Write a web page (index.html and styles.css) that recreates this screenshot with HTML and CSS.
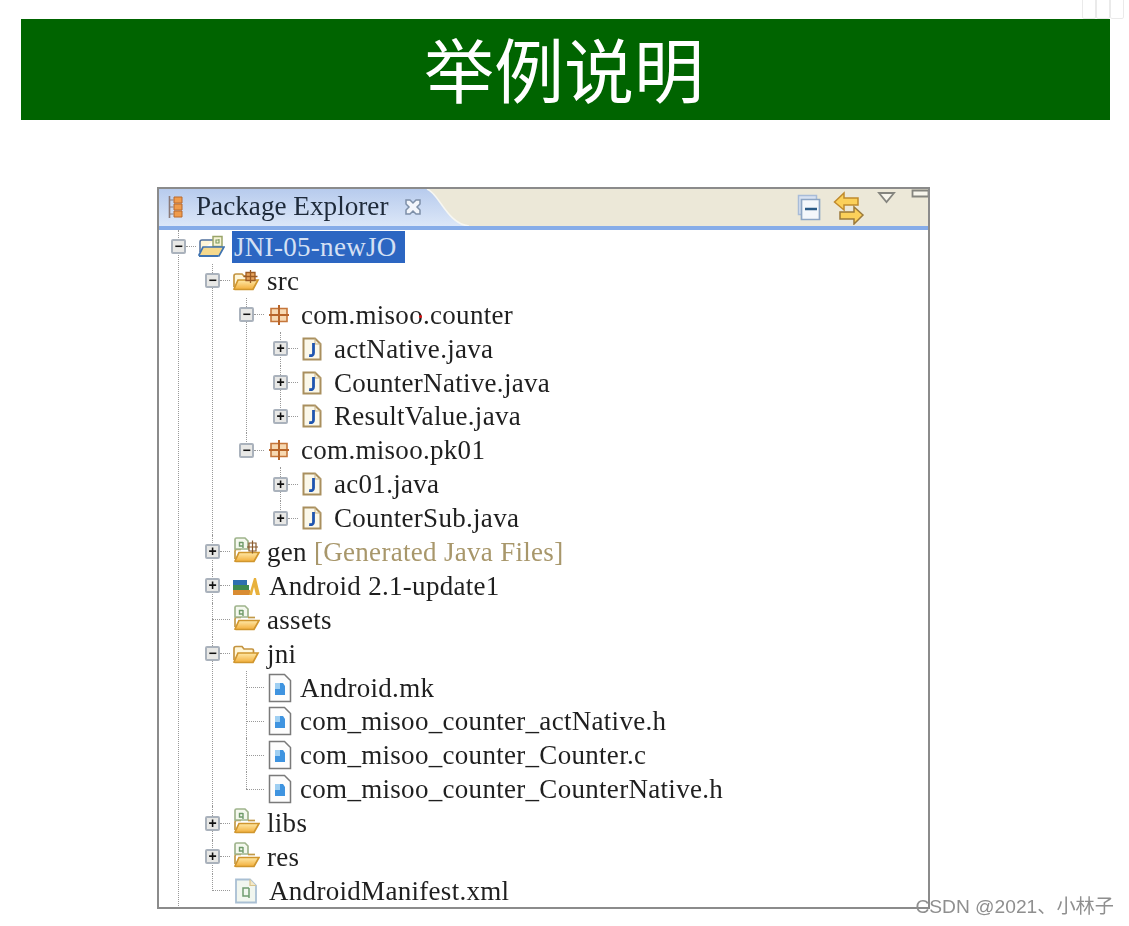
FILE: index.html
```html
<!DOCTYPE html>
<html lang="zh">
<head>
<meta charset="utf-8">
<title>举例说明</title>
<link rel="stylesheet" href="styles.css">
</head>
<body>
<svg class="defs" width="0" height="0" aria-hidden="true">
  <defs>
    <linearGradient id="folderFill" x1="0" y1="0" x2="0" y2="1">
      <stop offset="0" stop-color="#ffe9a8"/><stop offset="1" stop-color="#f2ae3a"/>
    </linearGradient>
    <linearGradient id="tabFill" x1="0" y1="0" x2="0" y2="1">
      <stop offset="0" stop-color="#b7cbed"/><stop offset="1" stop-color="#dce7f8"/>
    </linearGradient>
    <symbol id="i-folder" viewBox="0 0 28 24">
      <path d="M2 18V6.500C2 5 3 4.500 4 4.500h6l2 2.500h8c1 0 1.500.6 1.500 1.500V11" fill="#fff6d8" stroke="#c49440" stroke-width="1.700"/>
      <path d="M2 20l4-9h20l-5 9.500H3z" fill="url(#folderFill)" stroke="#d0962e" stroke-width="1.700"/>
    </symbol>
    <symbol id="i-srcfolder" viewBox="0 0 28 24">
      <path d="M2 18V7c0-1.500 1-2 2-2h6l2 2h8" fill="#fff6d8" stroke="#c49440" stroke-width="1.700"/>
      <path d="M2 20l4-9h20l-5 9.500H3z" fill="url(#folderFill)" stroke="#d0962e" stroke-width="1.700"/>
      <path d="M14 3.500h9v8h-9zM18.500 1v13M11.500 7.500h14" fill="#e8a45c" stroke="#9c5a22" stroke-width="1.300"/>
    </symbol>
    <symbol id="i-resfolder" viewBox="0 0 28 28">
      <path d="M3 23V15c0-1 .6-1.500 1.500-1.500H9" fill="none" stroke="#c29a48" stroke-width="1.700"/>
      <path d="M3 3.500c0-1 .8-1.500 1.500-1.500H13l3 3v8H3z" fill="#f4f8ee" stroke="#9fb48c" stroke-width="1.700"/>
      <path d="M11 6.500H7.500v3.500H11V6M11 10v2" fill="none" stroke="#6f9a6a" stroke-width="1.400"/>
      <path d="M16 13.500h7" stroke="#c29a48" stroke-width="1.700"/>
      <path d="M3 25l4-8.500h20l-5 9H4z" fill="url(#folderFill)" stroke="#d0962e" stroke-width="1.700"/>
    </symbol>
    <symbol id="i-genfolder" viewBox="0 0 28 28">
      <path d="M3 23V15c0-1 .6-1.500 1.500-1.500H9" fill="none" stroke="#c29a48" stroke-width="1.700"/>
      <path d="M3 3.500c0-1 .8-1.500 1.500-1.500H13l3 3v8H3z" fill="#f4f8ee" stroke="#9fb48c" stroke-width="1.700"/>
      <path d="M11 6.500H7.500v3.500H11V6M11 10v2" fill="none" stroke="#6f9a6a" stroke-width="1.400"/>
      <path d="M3 25l4-8.500h20l-5 9H4z" fill="url(#folderFill)" stroke="#d0962e" stroke-width="1.700"/>
      <path d="M17 7h7v8h-7zM20.500 4.500v13M15 11h11" fill="none" stroke="#8a5a2c" stroke-width="1.200"/>
    </symbol>
    <symbol id="i-project" viewBox="0 0 28 24">
      <path d="M3 17V7c0-1.500 1-2 2-2h12" fill="#fff6d8" stroke="#4f6f9c" stroke-width="1.500"/>
      <path d="M16 1.500h9v10h-9z" fill="#f6f4d6" stroke="#9aa56a" stroke-width="1.500"/>
      <path d="M22 5h-3v3h3V4" fill="none" stroke="#7c9a5e" stroke-width="1.100"/>
      <path d="M2 20l4-8h21l-5 9H3z" fill="#f5d98c" stroke="#3f73b0" stroke-width="1.700"/>
      <path d="M2 21h19" stroke="#3f73b0" stroke-width="2"/>
    </symbol>
    <symbol id="i-package" viewBox="0 0 22 22">
      <path d="M3 4.500h16v13H3z" fill="#f7d9b2" stroke="#c5763a" stroke-width="1.600"/>
      <path d="M11 1v20M1 11h20" stroke="#b8652a" stroke-width="2"/>
    </symbol>
    <symbol id="i-java" viewBox="0 0 20 24">
      <path d="M1.500 1.500h11.500l5.500 5.500v15.500h-17z" fill="#fbf8ea" stroke="#a98f5e" stroke-width="2"/>
      <path d="M13 1.500v5.500h5.500" fill="none" stroke="#c9b488" stroke-width="1"/>
      <path d="M11.500 6v10c0 2.300-1.500 3-4.300 2.500" fill="none" stroke="#1f55b0" stroke-width="2.800"/>
    </symbol>
    <symbol id="i-file" viewBox="0 0 26 30">
      <path d="M2.500 1.500h15l6 6v21h-21z" fill="#fdfdfd" stroke="#7a7a7a" stroke-width="1.500"/>
      <path d="M8 10h8l2 3v9H8z" fill="#3f94e0"/>
      <path d="M8 10h5v6H8z" fill="#9fcff2"/>
    </symbol>
    <symbol id="i-xml" viewBox="0 0 24 26">
      <path d="M2 1.500h14l6 6v17H2z" fill="#f1f6ef" stroke="#a9bfd3" stroke-width="1.800"/>
      <path d="M16 1.500v6h6" fill="#f4e9c8" stroke="#d8c48c" stroke-width="1.200"/>
      <path d="M15 10H9v8h6V10m0 8v2" fill="none" stroke="#6f9c70" stroke-width="1.500"/>
    </symbol>
    <symbol id="i-lib" viewBox="0 0 28 22">
      <path d="M1 5h14v5H1z" fill="#2d6fb0"/>
      <path d="M1 10h16v5H1z" fill="#3f8a4f"/>
      <path d="M1 15h17v5H1z" fill="#d98c32"/>
      <path d="M17 20l5-17h2l4 17h-4l-2-8-2 8z" fill="#e8b13c"/>
    </symbol>
  </defs>
</svg>

<div class="ghost" aria-hidden="true"><i></i><i></i><i></i></div>

<header class="banner"><h1>举例说明</h1></header>

<section class="view">
  <div class="view-head">
    <div class="tab">
      <svg class="tab-icon" width="18" height="24" viewBox="0 0 18 24"><path d="M2.500 1v22" stroke="#8a7a78" stroke-width="1.600"/><path d="M2.500 5h4M2.500 12h4M2.500 19h4" stroke="#8a7a78"/><path d="M7 2h8v6H7zM7 9h8v6H7zM7 16h8v6H7z" fill="#ef9b4c" stroke="#b8682c"/></svg>
      <span class="tab-title">Package Explorer</span>
      <svg class="tab-close" width="20" height="20" viewBox="0 0 20 20"><path d="M3 3h4l3 3 3-3h4v4l-3 3 3 3v4h-4l-3-3-3 3H3v-4l3-3-3-3z" fill="#f2f5fb" stroke="#7d8fa8" stroke-width="1.500"/></svg>
    </div>
    <svg class="tab-curve" width="44" height="37" viewBox="0 0 44 37" preserveAspectRatio="none"><path d="M0 0H2C14 4 22 35 44 37H0z" fill="url(#tabFill)"/><path d="M2 0C14 4 22 35 44 37" fill="none" stroke="#f7f7f2" stroke-width="1.500"/></svg>
    <div class="toolbar">
      <svg width="26" height="28" viewBox="0 0 26 28"><path d="M1.500 2.500h18v19h-18z" fill="#d8e2f2" stroke="#a8bcd8" stroke-width="1.500"/><path d="M4.500 6.500h18v20h-18z" fill="#f4f7fb" stroke="#8ea6c4" stroke-width="1.700"/><path d="M8 16h12" stroke="#2b5a86" stroke-width="2.500"/></svg>
      <svg class="sync" width="32" height="34" viewBox="0 0 32 34"><path d="M1.500 11L11 2v5h14v7H11v5z" fill="#fbd05a" stroke="#c08a2c" stroke-width="1.500"/><path d="M30 24l-9-8v5H7v7h14v5z" fill="#fbd05a" stroke="#9c7a3a" stroke-width="1.500"/></svg>
      <svg class="menu" width="20" height="14" viewBox="0 0 20 14"><path d="M2 2h15l-7.500 9z" fill="#f7f5ec" stroke="#85857f" stroke-width="1.800"/></svg>
      <svg class="min" width="18" height="10" viewBox="0 0 18 10"><path d="M1.500 1.500h16v6h-16z" fill="#f7f5ec" stroke="#85857f" stroke-width="1.800"/></svg>
    </div>
  </div>

  <ul class="tree">
    <li>
      <div class="row"><span class="tog">−</span><span class="dash"></span><svg class="ic ic-project"><use href="#i-project"/></svg><span class="label selected">JNI-05-newJO</span></div>
      <ul>
        <li>
          <div class="row"><span class="tog">−</span><span class="dash"></span><svg class="ic ic-folder"><use href="#i-srcfolder"/></svg><span class="label">src</span></div>
          <ul>
            <li>
              <div class="row"><span class="tog">−</span><span class="dash"></span><svg class="ic ic-pkg"><use href="#i-package"/></svg><span class="label">com.misoo.counter<i class="dot"></i></span></div>
              <ul>
                <li><div class="row"><span class="tog plus">+</span><span class="dash"></span><svg class="ic ic-java"><use href="#i-java"/></svg><span class="label">actNative.java</span></div></li>
                <li><div class="row"><span class="tog plus">+</span><span class="dash"></span><svg class="ic ic-java"><use href="#i-java"/></svg><span class="label">CounterNative.java</span></div></li>
                <li><div class="row"><span class="tog plus">+</span><span class="dash"></span><svg class="ic ic-java"><use href="#i-java"/></svg><span class="label">ResultValue.java</span></div></li>
              </ul>
            </li>
            <li>
              <div class="row"><span class="tog">−</span><span class="dash"></span><svg class="ic ic-pkg"><use href="#i-package"/></svg><span class="label">com.misoo.pk01</span></div>
              <ul>
                <li><div class="row"><span class="tog plus">+</span><span class="dash"></span><svg class="ic ic-java"><use href="#i-java"/></svg><span class="label">ac01.java</span></div></li>
                <li><div class="row"><span class="tog plus">+</span><span class="dash"></span><svg class="ic ic-java"><use href="#i-java"/></svg><span class="label">CounterSub.java</span></div></li>
              </ul>
            </li>
          </ul>
        </li>
        <li><div class="row"><span class="tog plus">+</span><span class="dash"></span><svg class="ic ic-res"><use href="#i-genfolder"/></svg><span class="label">gen <span class="deco">[Generated Java Files]</span></span></div></li>
        <li><div class="row"><span class="tog plus">+</span><span class="dash"></span><svg class="ic ic-lib"><use href="#i-lib"/></svg><span class="label">Android 2.1-update1</span></div></li>
        <li><div class="row"><span class="leaf"></span><svg class="ic ic-res"><use href="#i-resfolder"/></svg><span class="label">assets</span></div></li>
        <li>
          <div class="row"><span class="tog">−</span><span class="dash"></span><svg class="ic ic-folder"><use href="#i-folder"/></svg><span class="label">jni</span></div>
          <ul>
            <li><div class="row"><span class="leaf"></span><svg class="ic ic-file"><use href="#i-file"/></svg><span class="label">Android.mk</span></div></li>
            <li><div class="row"><span class="leaf"></span><svg class="ic ic-file"><use href="#i-file"/></svg><span class="label">com_misoo_counter_actNative.h</span></div></li>
            <li><div class="row"><span class="leaf"></span><svg class="ic ic-file"><use href="#i-file"/></svg><span class="label">com_misoo_counter_Counter.c</span></div></li>
            <li><div class="row"><span class="leaf"></span><svg class="ic ic-file"><use href="#i-file"/></svg><span class="label">com_misoo_counter_CounterNative.h</span></div></li>
          </ul>
        </li>
        <li><div class="row"><span class="tog plus">+</span><span class="dash"></span><svg class="ic ic-res"><use href="#i-resfolder"/></svg><span class="label">libs</span></div></li>
        <li><div class="row"><span class="tog plus">+</span><span class="dash"></span><svg class="ic ic-res"><use href="#i-resfolder"/></svg><span class="label">res</span></div></li>
        <li><div class="row"><span class="leaf"></span><svg class="ic ic-xml"><use href="#i-xml"/></svg><span class="label">AndroidManifest.xml</span></div></li>
      </ul>
    </li>
  </ul>
</section>

<div class="watermark">CSDN @2021、小林子</div>
</body>
</html>
```
FILE: styles.css
```css
* { box-sizing: border-box; }
html, body { margin: 0; padding: 0; height: 926px; overflow: hidden; background: #fff; }
body { position: relative; padding-top: 19px; font-family: "Liberation Serif", "Noto Sans CJK TC", serif; }
.defs { position: absolute; }

.banner {
  margin-left: 21px;
  width: 1089px;
  height: 101px;
  background: #006400;
  display: flex;
  align-items: center;
  justify-content: center;
}
.banner h1 {
  margin: 0 0 4px -3px;
  font-family: "Noto Sans CJK SC", "Noto Sans CJK TC", sans-serif;
  font-weight: 400;
  font-size: 70px;
  line-height: 1;
  color: #fff;
  filter: blur(.5px);
}

.ghost { position: absolute; top: -6px; left: 1082px; display: flex; opacity: .55; }
.ghost i { width: 14px; height: 25px; border: 1px solid #d9d9d9; border-radius: 2px; }

.view {
  margin: 67px 0 0 157px;
  width: 773px;
  height: 722px;
  border: 2px solid #8b8b8b;
  overflow: hidden;
  background: #fff;
}
.view-head {
  display: flex;
  height: 41px;
  border-bottom: 4px solid #86ace8;
  background: #ece8d8;
}
.tab {
  width: 266px;
  display: flex;
  align-items: center;
  padding: 0 0 2px 8px;
  background: linear-gradient(#b7cbed, #dce7f8);
}
.tab-icon { flex: none; }
.tab-title { margin-left: 11px; font-size: 27.2px; color: #1e2a3a; white-space: nowrap; filter: blur(.4px); }
.tab-close { margin-left: 14px; flex: none; }
.tab-curve { flex: none; }
.toolbar { flex: 1; display: flex; align-items: flex-start; justify-content: flex-end; }
.toolbar svg { flex: none; margin-top: 4px; filter: blur(.4px); }
.toolbar .sync { margin: 2px 0 0 10px; }
.toolbar .menu { margin: 2px 0 0 12px; }
.toolbar .min { margin: 0 -1px 0 14px; }

.tree, .tree ul { list-style: none; margin: 0; padding: 0; }
.tree { padding: 0 0 0 12px; filter: blur(.45px); }
.tree ul { margin-left: 34px; }
.tree li { position: relative; }
.tree li::before {
  content: "";
  position: absolute;
  left: 7px;
  top: 0;
  bottom: 0;
  border-left: 1px dotted #999;
}
.tree li:last-child::before { bottom: auto; height: 17px; }
.tree > li:last-child::before { height: auto; bottom: -40px; }
.row { display: flex; align-items: center; height: 33.9px; white-space: nowrap; position: relative; }
.tog {
  flex: none;
  position: relative;
  width: 15px;
  height: 15px;
  border: 2px solid #aab2bc;
  border-radius: 2px;
  background: #e8e8e6;
  color: #111;
  font: bold 14px/10px "Liberation Sans", sans-serif;
  text-align: center;
}
.dash, .leaf { flex: none; height: 0; border-top: 1px dotted #999; }
.dash { width: 10px; }
.leaf { width: 18px; margin-left: 7px; }
.ic { flex: none; }
.ic-project { width: 28px; height: 24px; margin: 0 7px 0 1px; }
.ic-folder { width: 28px; height: 24px; margin: 0 7px 0 2px; }
.ic-pkg { width: 22px; height: 22px; margin: 0 11px 0 4px; }
.ic-java { width: 20px; height: 24px; margin: 0 12px 0 4px; }
.ic-res { width: 28px; height: 28px; margin: -4px 7px 0 2px; }
.ic-lib { width: 28px; height: 22px; margin: 0 9px 0 2px; }
.ic-file { width: 26px; height: 30px; margin: 0 7px 0 3px; }
.ic-xml { width: 24px; height: 26px; margin: 0 11px 0 4px; }
.label { position: relative; font-size: 27px; letter-spacing: .3px; line-height: 32px; color: #1f1f1f; }
.label.selected { background: #2c66c2; color: #d4e0f4; padding: 0 8px 0 2px; }
.deco { color: #a8976b; }
.dot { position: absolute; left: 118px; top: 16px; width: 3px; height: 3px; border-radius: 50%; background: #e01010; }

.watermark {
  position: absolute;
  right: 15px;
  top: 895px;
  font-family: "Liberation Sans", "Noto Sans CJK SC", sans-serif;
  font-size: 19.2px;
  line-height: 24px;
  color: #8f8f8f;
  white-space: nowrap;
}
```
